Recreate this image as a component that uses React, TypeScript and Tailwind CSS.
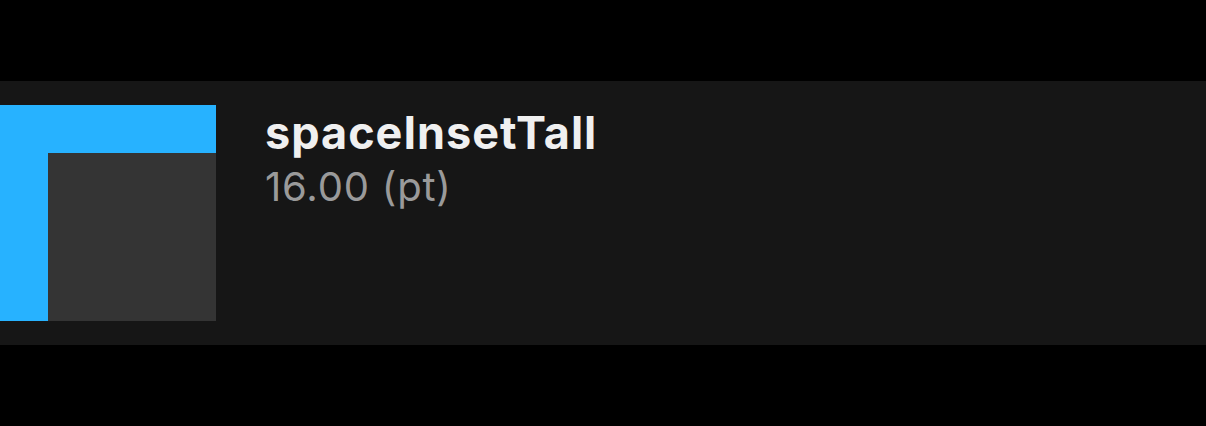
import React from "react";

export default function App() {
  return (
    <div className="h-screen w-full bg-black flex flex-col justify-center" style={{ fontFamily: "Inter, 'Noto Sans', sans-serif" }}>
      <div className="bg-[#161616] py-6 flex items-start">
        {/* swatch */}
        <div className="w-[216px] h-[216px] bg-[#27b2ff] flex items-end justify-end shrink-0">
          <div className="w-[168px] h-[168px] bg-[#343434]" />
        </div>

        <div className="ml-[49px] flex flex-col">
          <div className="text-[45px] font-bold text-[#f0f0f0] leading-[48px] mt-[4px] tracking-[1px]">spaceInsetTall</div>
          <div className="text-[40px] text-[#9a9a9a] leading-[44px] mt-2 tracking-[0.8px]">16.00 (pt)</div>
        </div>
      </div>
    </div>
  );
}
